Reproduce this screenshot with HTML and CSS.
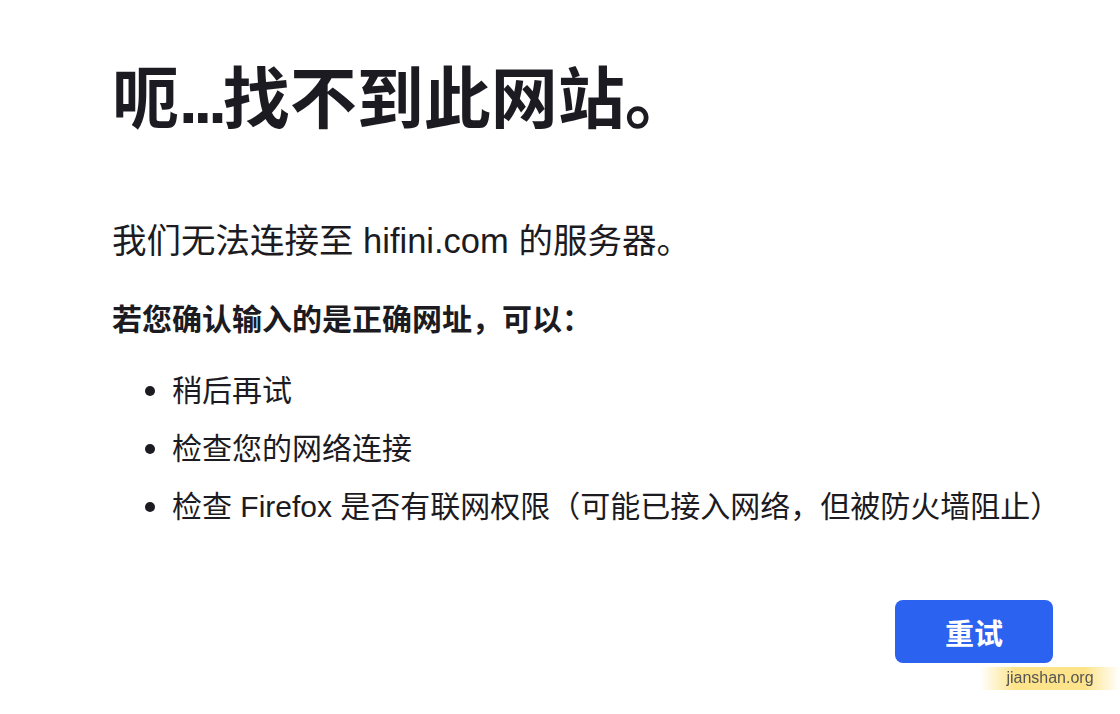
FILE: index.html
```html
<!DOCTYPE html>
<html lang="zh-CN">
<head>
  <meta charset="UTF-8" />
  <meta name="viewport" content="width=device-width, initial-scale=1" />
  <title>找不到服务器</title>
  <link rel="stylesheet" href="styles.css">
</head>
<body>
  <main class="container">
    <h1 class="title">呃<span class="dots">...</span>找不到此网站。</h1>
    <p class="desc">我们无法连接至 hifini.com 的服务器。</p>
    <p class="hint">若您确认输入的是正确网址，可以：</p>
    <ul class="tips">
      <li>稍后再试</li>
      <li>检查您的网络连接</li>
      <li>检查 Firefox 是否有联网权限（可能已接入网络，但被防火墙阻止）</li>
    </ul>
    <div class="actions">
      <button class="retry" type="button">重试</button>
    </div>
  </main>

  <div class="watermark">jianshan.org</div>
</body>
</html>
```

FILE: styles.css
```css
:root {
  --text: #1c1b22;
  --blue: #2b62f0;
}
body {
  margin: 0;
  background: #fff;
  color: var(--text);
  font-family: "Liberation Sans", "Noto Sans CJK SC", sans-serif;
}
.container {
  padding: 60px 67px 0 112px;
}
.title {
  margin: 0;
  font-size: 67px;
  line-height: 80px;
  font-weight: bold;
}
.title .dots {
  letter-spacing: -4px;
}
.desc {
  margin: 77px 0 0;
  font-size: 34.5px;
  line-height: 48px;
}
.hint {
  margin: 35px 0 0;
  font-size: 30px;
  line-height: 40px;
  font-weight: bold;
}
.tips {
  list-style: none;
  margin: 22px 0 0;
  padding: 0;
}
.tips li {
  display: flex;
  align-items: center;
  gap: 17px;
  padding-left: 33px;
  font-size: 30px;
  line-height: 58px;
}
.tips li::before {
  content: "";
  width: 10px;
  height: 10px;
  border-radius: 50%;
  background: var(--text);
  flex: none;
}
.actions {
  display: flex;
  justify-content: flex-end;
  margin-top: 64px;
}
.retry {
  width: 158px;
  height: 63px;
  border: none;
  border-radius: 8px;
  background: var(--blue);
  color: #fff;
  font-family: inherit;
  font-size: 29px;
  font-weight: bold;
  cursor: pointer;
}
.watermark {
  position: fixed;
  right: 0;
  bottom: 24px;
  width: 140px;
  padding: 2px 0 3px;
  text-align: center;
  font-size: 16px;
  color: #555;
  background: linear-gradient(90deg, rgba(253,224,120,0), #fde48a 25%, #fde48a 75%, rgba(253,224,120,0));
}
```
